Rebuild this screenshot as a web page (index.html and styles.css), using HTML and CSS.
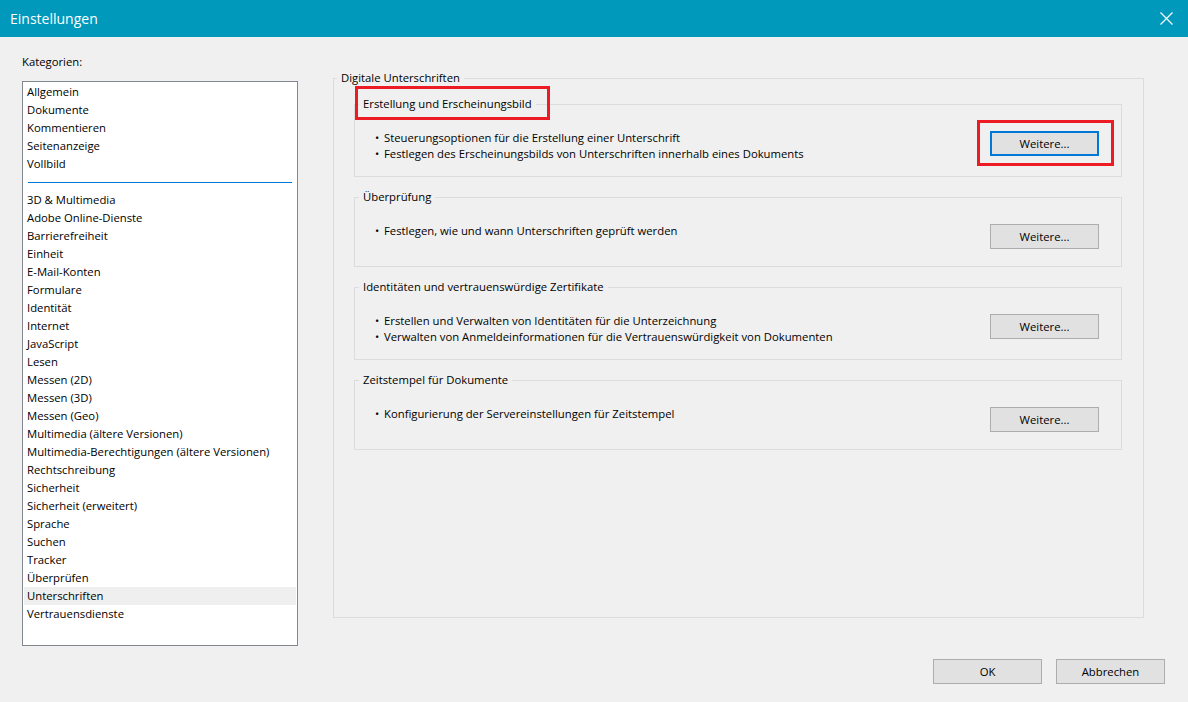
FILE: index.html
```html
<!DOCTYPE html>
<html lang="de">
<head>
  <meta charset="UTF-8">
  <title>Einstellungen</title>
  <link rel="stylesheet" href="styles.css">
</head>
<body>
  <!-- Title bar -->
  <header class="titlebar">
    <span class="title">Einstellungen</span>
    <svg class="close-icon" width="13" height="13" viewBox="0 0 13 13">
      <path d="M0.5 0.5 L12.5 12.5 M12.5 0.5 L0.5 12.5" stroke="#fff" stroke-width="1.2" fill="none"/>
    </svg>
  </header>

  <main class="main">
    <!-- Category list -->
    <section class="categories">
      <div class="label">Kategorien:</div>
      <ul class="listbox">
        <li>Allgemein</li>
        <li>Dokumente</li>
        <li>Kommentieren</li>
        <li>Seitenanzeige</li>
        <li>Vollbild</li>
        <li class="separator"></li>
        <li>3D &amp; Multimedia</li>
        <li>Adobe Online-Dienste</li>
        <li>Barrierefreiheit</li>
        <li>Einheit</li>
        <li>E-Mail-Konten</li>
        <li>Formulare</li>
        <li>Identität</li>
        <li>Internet</li>
        <li>JavaScript</li>
        <li>Lesen</li>
        <li>Messen (2D)</li>
        <li>Messen (3D)</li>
        <li>Messen (Geo)</li>
        <li>Multimedia (ältere Versionen)</li>
        <li>Multimedia-Berechtigungen (ältere Versionen)</li>
        <li>Rechtschreibung</li>
        <li>Sicherheit</li>
        <li>Sicherheit (erweitert)</li>
        <li>Sprache</li>
        <li>Suchen</li>
        <li>Tracker</li>
        <li>Überprüfen</li>
        <li class="selected">Unterschriften</li>
        <li>Vertrauensdienste</li>
      </ul>
    </section>

    <!-- Settings panel -->
    <fieldset class="panel">
      <legend>Digitale Unterschriften</legend>
      <div class="groups">
        <fieldset class="group">
          <legend class="marked-legend">Erstellung und Erscheinungsbild<span class="mark mark-legend"></span></legend>
          <div class="group-body">
            <ul class="bullets">
              <li>Steuerungsoptionen für die Erstellung einer Unterschrift</li>
              <li>Festlegen des Erscheinungsbilds von Unterschriften innerhalb eines Dokuments</li>
            </ul>
            <span class="marked">
              <button class="btn focused">Weitere...</button>
              <span class="mark mark-button"></span>
            </span>
          </div>
        </fieldset>

        <fieldset class="group">
          <legend>Überprüfung</legend>
          <div class="group-body">
            <ul class="bullets">
              <li>Festlegen, wie und wann Unterschriften geprüft werden</li>
            </ul>
            <button class="btn">Weitere...</button>
          </div>
        </fieldset>

        <fieldset class="group">
          <legend>Identitäten und vertrauenswürdige Zertifikate</legend>
          <div class="group-body">
            <ul class="bullets">
              <li>Erstellen und Verwalten von Identitäten für die Unterzeichnung</li>
              <li>Verwalten von Anmeldeinformationen für die Vertrauenswürdigkeit von Dokumenten</li>
            </ul>
            <button class="btn">Weitere...</button>
          </div>
        </fieldset>

        <fieldset class="group">
          <legend>Zeitstempel für Dokumente</legend>
          <div class="group-body">
            <ul class="bullets">
              <li>Konfigurierung der Servereinstellungen für Zeitstempel</li>
            </ul>
            <button class="btn">Weitere...</button>
          </div>
        </fieldset>
      </div>
    </fieldset>
  </main>

  <!-- Dialog buttons -->
  <footer class="actions">
    <button class="btn">OK</button>
    <button class="btn">Abbrechen</button>
  </footer>
</body>
</html>
```

FILE: styles.css
```css
/* General Reset */
* {
  margin: 0;
  padding: 0;
  box-sizing: border-box;
}

body {
  background: #f0f0f0;
  color: #000;
  font-family: "Open Sans", "Noto Sans", sans-serif;
  font-size: 11.3px;
  line-height: 16px;
}

ul {
  list-style: none;
}

/* Title bar */
.titlebar {
  height: 37px;
  background: #0099bc;
  color: #fff;
  display: flex;
  justify-content: space-between;
  align-items: center;
  padding: 0 15px 0 10px;
}

.title {
  font-size: 14px;
}

/* Main area */
.main {
  display: flex;
  align-items: flex-start;
  padding: 17px 22px 0;
}

.categories {
  width: 276px;
}

.label {
  margin-bottom: 11px;
}

.listbox {
  height: 565px;
  padding-top: 1px;
  background: #fff;
  border: 1px solid #828790;
}

.listbox li {
  height: 18px;
  line-height: 18px;
  margin: 0 1px;
  padding-left: 3px;
  white-space: nowrap;
}

.listbox li.selected {
  background: #efefef;
}

.listbox li.separator {
  padding: 9px 4px 0;
}

.listbox li.separator::before {
  content: "";
  display: block;
  height: 1px;
  background: #0078d7;
}

/* Group boxes */
fieldset {
  border: 1px solid #dcdcdc;
  min-width: 0;
}

legend {
  padding: 0 4px;
  line-height: 16px;
}

.panel {
  width: 811px;
  height: 548px;
  margin: 16px 0 0 35px;
  padding: 0 3px;
}

.groups {
  padding: 10px 18px 0 17px;
}

.group {
  padding: 0 4px;
  margin-bottom: 12px;
}

.group-body {
  display: flex;
  justify-content: space-between;
  align-items: flex-start;
  padding: 18px 18px 14px 16px;
}

.bullets li::before {
  content: "•";
  display: inline-block;
  width: 9px;
}

/* Buttons */
.btn {
  width: 109px;
  height: 25px;
  margin: 1px 0 3px;
  background: #e1e1e1;
  border: 1px solid #adadad;
  font: inherit;
  color: #000;
}

.btn.focused {
  border: 2px solid #0078d7;
}

/* Red annotation boxes */
.marked-legend,
.marked {
  position: relative;
}

.marked {
  display: block;
}

.mark {
  position: absolute;
  border: 3px solid #ed1c24;
}

.mark-legend {
  left: -4px;
  top: -10px;
  width: 195px;
  height: 34px;
}

.mark-button {
  left: -13px;
  top: -10px;
  width: 137px;
  height: 46px;
}

/* Footer */
.actions {
  display: flex;
  justify-content: flex-end;
  gap: 14px;
  padding: 13px 23px 0;
}

.actions .btn {
  margin: 0;
}
```
